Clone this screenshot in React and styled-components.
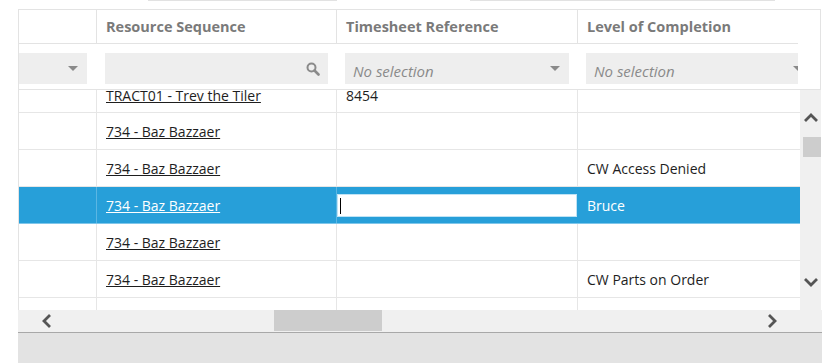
import React from 'react';
import styled, { createGlobalStyle } from 'styled-components';

const Global = createGlobalStyle`
  html, body {
    margin: 0;
    padding: 0;
    background: #ffffff;
    font-family: 'Open Sans', 'Liberation Sans', sans-serif;
    overflow: hidden;
  }
`;

const COLS = [78, 240, 241, 243];

const Page = styled.div`
  width: 822px;
  height: 363px;
  display: flex;
  flex-direction: column;
`;

const TopBar = styled.div`
  height: 9px;
  display: flex;
  align-items: flex-start;
`;

const TopField = styled.div`
  height: 1px;
  background: #e2e2e2;
  margin-left: ${(p) => p.$left}px;
  width: ${(p) => p.$width}px;
`;

const Grid = styled.div`
  margin-left: 18px;
  width: 804px;
  display: flex;
  flex-direction: column;
`;

const HeaderBox = styled.div`
  width: 803px;
  box-sizing: border-box;
  border: 1px solid #e3e3e3;
  display: flex;
`;

const HeaderViewport = styled.div`
  width: 779px;
  overflow: hidden;
`;

const HeaderRow = styled.div`
  display: flex;
  height: 34px;
  box-sizing: border-box;
  border-bottom: 1px solid #e3e3e3;
`;

const HeaderCell = styled.div`
  flex: 0 0 ${(p) => p.$w}px;
  box-sizing: border-box;
  border-right: 1px solid #e3e3e3;
  padding: 0 9px;
  display: flex;
  align-items: center;
  font-size: 14.5px;
  font-weight: 700;
  color: #7a7a7a;
  white-space: nowrap;
`;

const FilterRow = styled.div`
  display: flex;
  height: 45px;
`;

const FilterCell = styled.div`
  flex: 0 0 ${(p) => p.$w}px;
  box-sizing: border-box;
  padding: 9px ${(p) => (p.$first ? 10 : 9)}px 0 ${(p) => (p.$first ? 0 : 8)}px;
`;

const FilterBox = styled.div`
  height: 31px;
  background: #eeeeee;
  display: flex;
  align-items: center;
  justify-content: space-between;
  padding: 0 8px;
  box-sizing: border-box;
  font-size: 15px;
  font-style: italic;
  color: #8a8a8a;
  white-space: nowrap;
`;

const Placeholder = styled.span`
  padding-top: 5px;
`;

const Caret = styled.span`
  width: 0;
  height: 0;
  border-left: 5px solid transparent;
  border-right: 5px solid transparent;
  border-top: 5px solid #8a8a8a;
  margin-right: 1px;
`;

const ScrollSpacer = styled.div`
  flex: 1;
`;

const BodyWrap = styled.div`
  display: flex;
  height: 220px;
`;

const BodyViewport = styled.div`
  width: 782px;
  box-sizing: border-box;
  border-left: 1px solid #e3e3e3;
  overflow: hidden;
`;

const BodyRows = styled.div`
  margin-top: -14px;
`;

const Row = styled.div`
  display: flex;
  height: 37px;
  box-sizing: border-box;
  border-bottom: 1px solid ${(p) => (p.$selected ? '#7fc6ea' : '#e6e6e6')};
  background: ${(p) => (p.$selected ? '#279fd9' : '#ffffff')};
  color: ${(p) => (p.$selected ? '#ffffff' : '#1e1e1e')};
`;

const Cell = styled.div`
  flex: 0 0 ${(p) => p.$w}px;
  box-sizing: border-box;
  border-right: 1px solid ${(p) => (p.$selected ? '#5bb6e3' : '#e6e6e6')};
  padding: ${(p) => (p.$low ? '4px' : '2px')} 9px 0;
  display: flex;
  align-items: center;
  font-size: 14px;
  line-height: 16px;
  white-space: nowrap;
  overflow: hidden;
`;

const EditCell = styled.div`
  flex: 0 0 ${(p) => p.$w}px;
  box-sizing: border-box;
  padding: 7px 1px 6px 0;
  display: flex;
`;

const EditBox = styled.div`
  flex: 1;
  background: #ffffff;
  border: 1px solid #bfe3f5;
  display: flex;
  align-items: center;
  padding-left: 2px;
`;

const Cursor = styled.span`
  width: 1px;
  height: 16px;
  background: #000000;
`;

const LinkText = styled.span`
  text-decoration: underline;
  color: inherit;
`;

const VScroll = styled.div`
  width: 21px;
  background: #f0f0f0;
  display: flex;
  flex-direction: column;
  align-items: center;
  padding-top: 22px;
  box-sizing: border-box;
`;

const VThumb = styled.div`
  width: 18px;
  height: 20px;
  background: #cdcdcd;
  margin: 13px 0 0 2px;
`;

const VGrow = styled.div`
  flex: 1;
`;

const VEnd = styled.div`
  height: 22px;
`;

const HScroll = styled.div`
  height: 23px;
  box-sizing: border-box;
  border-bottom: 1px solid #a8a8a8;
  background: #f0f0f0;
  display: flex;
  align-items: flex-start;
`;

const HArrow = styled.div`
  width: ${(p) => p.$w}px;
  height: 22px;
  display: flex;
  align-items: center;
  justify-content: center;
`;

const HThumb = styled.div`
  width: 108px;
  height: 21px;
  background: #cdcdcd;
  margin-left: ${(p) => p.$left}px;
`;

const Corner = styled.div`
  width: 21px;
`;

const Footer = styled.div`
  margin-left: 18px;
  flex: 1;
  background: #e3e3e3;
`;

const Chevron = ({ dir }) => {
  const pts = {
    up: '2,9 8,3 14,9',
    down: '2,3 8,9 14,3',
    left: '9,2 3,8 9,14',
    right: '3,2 9,8 3,14',
  }[dir];
  const vertical = dir === 'up' || dir === 'down';
  return (
    <svg width={vertical ? 16 : 12} height={vertical ? 12 : 16} viewBox={vertical ? '0 0 16 12' : '0 0 12 16'}>
      <polyline points={pts} fill="none" stroke="#555555" strokeWidth="2.8" />
    </svg>
  );
};

const SearchIcon = () => (
  <svg width="14" height="14" viewBox="0 0 14 14">
    <circle cx="5.5" cy="5.5" r="4" fill="none" stroke="#8a8a8a" strokeWidth="2" />
    <line x1="8.5" y1="8.5" x2="12.5" y2="12.5" stroke="#8a8a8a" strokeWidth="2.6" strokeLinecap="round" />
  </svg>
);

const rows = [
  { res: 'TRACT01 - Trev the Tiler', ts: '8454', loc: '', low: true },
  { res: '734 - Baz Bazzaer', ts: '', loc: '' },
  { res: '734 - Baz Bazzaer', ts: '', loc: 'CW Access Denied' },
  { res: '734 - Baz Bazzaer', ts: '', loc: 'Bruce', selected: true },
  { res: '734 - Baz Bazzaer', ts: '', loc: '' },
  { res: '734 - Baz Bazzaer', ts: '', loc: 'CW Parts on Order' },
  { res: '', ts: '', loc: '' },
];

export default function App() {
  return (
    <Page>
      <Global />
      <TopBar>
        <TopField $left={148} $width={189} />
        <TopField $left={133} $width={305} />
      </TopBar>
      <Grid>
        <HeaderBox>
          <HeaderViewport>
            <HeaderRow>
              <HeaderCell $w={COLS[0]} />
              <HeaderCell $w={COLS[1]}>Resource Sequence</HeaderCell>
              <HeaderCell $w={COLS[2]}>Timesheet Reference</HeaderCell>
              <HeaderCell $w={COLS[3]}>Level of Completion</HeaderCell>
            </HeaderRow>
            <FilterRow>
              <FilterCell $w={COLS[0]} $first>
                <FilterBox>
                  <span />
                  <Caret />
                </FilterBox>
              </FilterCell>
              <FilterCell $w={COLS[1]}>
                <FilterBox>
                  <span />
                  <SearchIcon />
                </FilterBox>
              </FilterCell>
              <FilterCell $w={COLS[2]}>
                <FilterBox>
                  <Placeholder>No selection</Placeholder>
                  <Caret />
                </FilterBox>
              </FilterCell>
              <FilterCell $w={COLS[3]}>
                <FilterBox>
                  <Placeholder>No selection</Placeholder>
                  <Caret />
                </FilterBox>
              </FilterCell>
            </FilterRow>
          </HeaderViewport>
          <ScrollSpacer />
        </HeaderBox>
        <BodyWrap>
          <BodyViewport>
            <BodyRows>
              {rows.map((r, i) => (
                <Row key={i} $selected={r.selected}>
                  <Cell $w={COLS[0]} $selected={r.selected} />
                  <Cell $w={COLS[1]} $selected={r.selected} $low={r.low}>
                    {r.res && <LinkText>{r.res}</LinkText>}
                  </Cell>
                  {r.selected ? (
                    <EditCell $w={COLS[2]}>
                      <EditBox>
                        <Cursor />
                      </EditBox>
                    </EditCell>
                  ) : (
                    <Cell $w={COLS[2]} $low={r.low}>{r.ts}</Cell>
                  )}
                  <Cell $w={COLS[3]} $selected={r.selected}>
                    {r.loc}
                  </Cell>
                </Row>
              ))}
            </BodyRows>
          </BodyViewport>
          <VScroll>
            <Chevron dir="up" />
            <VThumb />
            <VGrow />
            <Chevron dir="down" />
            <VEnd />
          </VScroll>
        </BodyWrap>
        <HScroll>
          <HArrow $w={57}>
            <Chevron dir="left" />
          </HArrow>
          <HThumb $left={199} />
          <ScrollSpacer />
          <HArrow $w={58}>
            <Chevron dir="right" />
          </HArrow>
          <Corner />
        </HScroll>
      </Grid>
      <Footer />
    </Page>
  );
}
